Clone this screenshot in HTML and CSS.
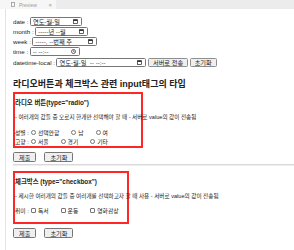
FILE: index.html
```html
<!DOCTYPE html>
<html lang="ko">
<head>
  <meta charset="UTF-8">
  <meta name="viewport" content="width=device-width, initial-scale=1.0">
  <title>Preview</title>
  <link rel="stylesheet" href="styles.css">
</head>
<body>
  <div class="tabbar">
    <div class="tab">
      <svg class="tab-icon" width="4" height="5" viewBox="0 0 4 5"><rect x="0.5" y="0.5" width="3" height="4" fill="none" stroke="#9a9a9a" stroke-width="0.8"/></svg>
      <span>Preview</span>
      <span class="tab-x">×</span>
    </div>
  </div>

  <main class="page">

    <div class="row">
      <span>date :</span>
      <span class="field w-date">연도-월-일 <svg class="cal" width="5" height="5" viewBox="0 0 5 5"><rect x="0.5" y="0.7" width="4" height="3.8" fill="none" stroke="#222" stroke-width="0.7"/><rect x="0.5" y="0.7" width="4" height="1.2" fill="#222"/></svg></span>
    </div>
    <div class="row">
      <span>month :</span>
      <span class="field w-month">-----년 --월 <svg class="cal" width="5" height="5" viewBox="0 0 5 5"><rect x="0.5" y="0.7" width="4" height="3.8" fill="none" stroke="#222" stroke-width="0.7"/><rect x="0.5" y="0.7" width="4" height="1.2" fill="#222"/></svg></span>
    </div>
    <div class="row">
      <span>week :</span>
      <span class="field w-week">-----, --번째 주 <svg class="cal" width="5" height="5" viewBox="0 0 5 5"><rect x="0.5" y="0.7" width="4" height="3.8" fill="none" stroke="#222" stroke-width="0.7"/><rect x="0.5" y="0.7" width="4" height="1.2" fill="#222"/></svg></span>
    </div>
    <div class="row">
      <span>time :</span>
      <span class="field w-time">-- --:-- <svg class="cal" width="5" height="5" viewBox="0 0 5 5"><circle cx="2.5" cy="2.5" r="2" fill="none" stroke="#222" stroke-width="0.7"/><path d="M2.5 1.3V2.6H3.5" fill="none" stroke="#222" stroke-width="0.6"/></svg></span>
    </div>
    <div class="row">
      <span>datetime-local :</span>
      <span class="field w-dt">연도-월-일 &nbsp;-- --:-- <svg class="cal" width="5" height="5" viewBox="0 0 5 5"><rect x="0.5" y="0.7" width="4" height="3.8" fill="none" stroke="#222" stroke-width="0.7"/><rect x="0.5" y="0.7" width="4" height="1.2" fill="#222"/></svg></span>
      <span class="btn">서버로 전송</span>
      <span class="btn">초기화</span>
    </div>

    <h2>라디오버튼과 체크박스 관련 input태그의 타입</h2>

    <div class="box box-radio">
      <h4>라디오 버튼(type="radio")</h4>
      <p class="desc">- 여러개의 값들 중 오로지 한개만 선택해야 할 때 - 서버로 value의 값이 전송됨</p>
      <div class="opts">
        <span>성별 :</span>
        <span class="opt"><i class="radio"></i>선택안함</span>
        <span class="opt"><i class="radio"></i>남</span>
        <span class="opt"><i class="radio"></i>여</span>
      </div>
      <div class="opts">
        <span>고향 :</span>
        <span class="opt"><i class="radio"></i>서울</span>
        <span class="opt"><i class="radio"></i>경기</span>
        <span class="opt"><i class="radio"></i>기타</span>
      </div>
    </div>
    <div class="btns">
      <span class="btn">제출</span>
      <span class="btn">초기화</span>
    </div>

    <hr>

    <div class="box box-check">
      <h4>체크박스 (type="checkbox")</h4>
      <p class="desc">- 제시한 여러개의 값들 중 여러개를 선택하고자 할 때 사용 - 서버로 value의 값이 전송됨</p>
      <div class="opts">
        <span>취미 :</span>
        <span class="opt"><i class="check"></i>독서</span>
        <span class="opt"><i class="check"></i>운동</span>
        <span class="opt"><i class="check"></i>영화감상</span>
      </div>
    </div>
    <div class="btns">
      <span class="btn">제출</span>
      <span class="btn">초기화</span>
    </div>

  </main>
</body>
</html>
```

FILE: styles.css
```css
html, body{
  margin: 0;
  padding: 0;
  height: 100%;
  overflow: hidden;
  background: #fff;
}
body{
  font-family: "Liberation Sans", "Noto Sans CJK KR", sans-serif;
  font-size: 6.2px;
  color: #222;
}

.tabbar{
  height: 9px;
  background: #ececec;
  display: flex;
}
.tab{
  width: 56px;
  background: #f6f6f6;
  display: flex;
  align-items: center;
  padding-left: 11px;
  box-sizing: border-box;
  color: #9a9a9a;
  font-size: 5px;
}
.tab-icon{
  margin-right: 4px;
}
.tab-x{
  margin-left: auto;
  margin-right: 4px;
  font-size: 6px;
}

.page{
  margin-left: 5px;
  border-left: 1px solid #e3e3e3;
  height: 100%;
  padding: 7px 0 0 7px;
  box-sizing: border-box;
}

.row{
  display: flex;
  align-items: center;
  height: 10.25px;
}
.row > span:first-child{
  margin-right: 1.5px;
}
.field{
  height: 9px;
  box-sizing: border-box;
  border: 1px solid #767676;
  border-radius: 1.5px;
  display: flex;
  align-items: center;
  justify-content: space-between;
  padding: 0 3px 0 2px;
  white-space: pre;
}
.w-date{ width: 52px; }
.w-month{ width: 53px; }
.w-week{ width: 65px; }
.w-time{ width: 50px; }
.w-dt{ width: 90px; }

.btn{
  display: inline-flex;
  align-items: center;
  justify-content: center;
  height: 9px;
  box-sizing: border-box;
  padding: 0 4px;
  border: 1px solid #8f8f8f;
  border-radius: 1.5px;
  background: #efefef;
  margin-left: 1.5px;
}

h2{
  font-size: 9px;
  font-weight: bold;
  margin: 10px 0 0;
  height: 14px;
  line-height: 14px;
}

.box{
  border: 2px solid #ff2626;
  margin-top: 1px;
  box-sizing: border-box;
}
.box-radio{
  width: 130px;
  height: 56px;
}
.box-check{
  width: 116px;
  height: 53px;
}
h4{
  margin: 0;
  padding-top: 5px;
  font-size: 6.4px;
  line-height: 8px;
}
.desc{
  margin: 6px 0 0;
  white-space: nowrap;
  line-height: 8px;
  font-size: 5.6px;
}
.opts{
  display: flex;
  align-items: center;
  height: 9.5px;
  white-space: nowrap;
  font-size: 5.8px;
}
.box-radio .desc{
  margin-bottom: 6px;
}
.box-check .desc{
  margin-bottom: 5px;
}
.opt{
  display: flex;
  align-items: center;
  margin-left: 12px;
}
.opts > span:nth-child(2){
  margin-left: 2px;
}
.radio, .check{
  width: 5px;
  height: 5px;
  box-sizing: border-box;
  border: 0.8px solid #767676;
  margin-right: 2px;
}
.radio{
  border-radius: 50%;
}
.check{
  border-radius: 1px;
}

.btns{
  display: flex;
  gap: 8px;
  margin-top: 4px;
}
.btns .btn{
  height: 10px;
  margin-left: 0;
  padding: 0 5px;
  border-color: #767676;
}

hr{
  margin: 2px 0 0;
  border: none;
  border-top: 1px solid #d9d9d9;
  border-bottom: 1px solid #eeeeee;
}
.box-check{
  margin-top: 5px;
}
```
